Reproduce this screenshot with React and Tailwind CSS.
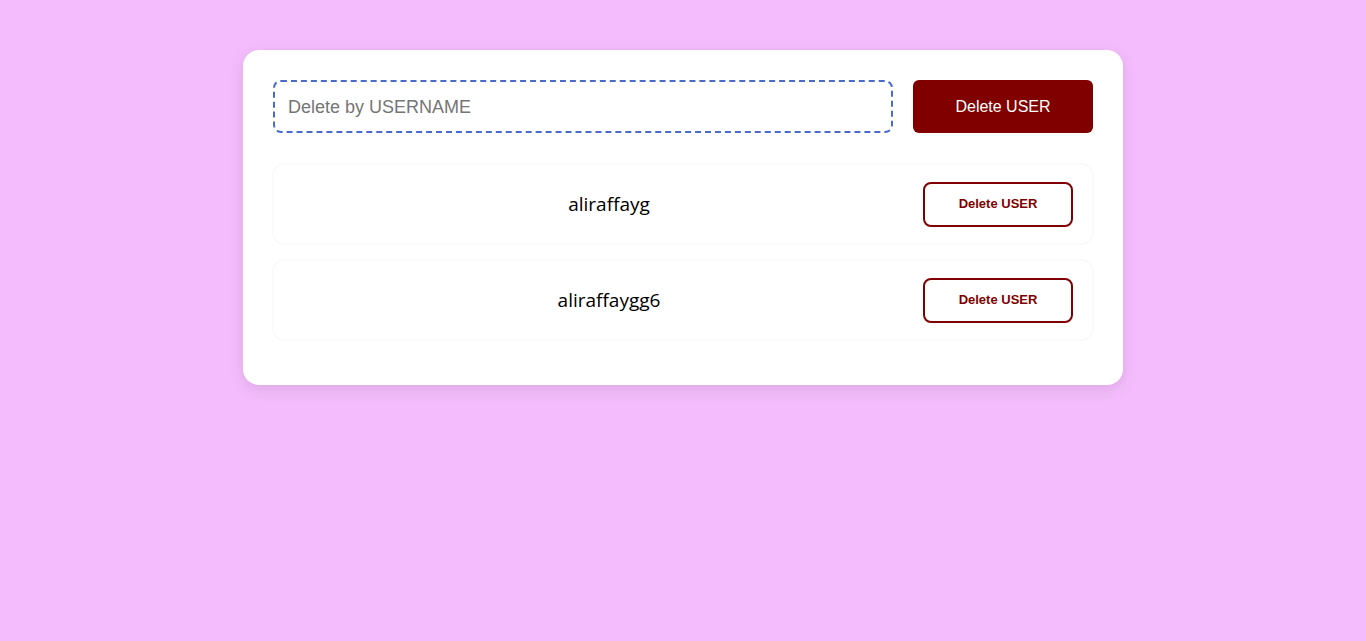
import { useState } from 'react';

const App = () => {
  const [users, setUsers] = useState(['aliraffayg', 'aliraffaygg6']);
  const [name, setName] = useState('');

  const removeUser = (u) => setUsers(users.filter((x) => x !== u));

  return (
    <div className="min-h-screen bg-[#f4bcfc] pt-[50px] font-['Liberation_Sans',Arial,sans-serif]">
      <div className="mx-auto w-[880px] bg-white rounded-2xl shadow-[0_4px_16px_rgba(0,0,0,0.1)] pt-[30px] pb-[44px] px-[30px]">
        <div className="flex gap-5">
          <input
            value={name}
            onChange={(e) => setName(e.target.value)}
            placeholder="Delete by USERNAME"
            className="w-[620px] h-[53px] border-2 border-dashed border-[#4a6bc9] rounded-lg px-[13px] pt-px text-lg text-gray-800 placeholder:text-[#767676] outline-none"
          />
          <button
            onClick={() => removeUser(name)}
            className="w-[180px] h-[53px] bg-[#800000] text-white rounded-md text-base"
          >
            Delete USER
          </button>
        </div>

        <div className="mt-[30px] -mx-px flex flex-col gap-[14px]">
          {users.map((u) => (
            <div key={u} className="h-[82px] flex items-center pl-[21px] pr-[19px] border-2 border-[#fafafa] rounded-xl">
              <p className="flex-1 text-center text-[19px] text-black font-['Open_Sans',sans-serif]">{u}</p>
              <button
                onClick={() => removeUser(u)}
                className="w-[150px] h-[45px] border-2 border-[#800000] rounded-lg text-[13px] font-bold text-[#800000]"
              >
                Delete USER
              </button>
            </div>
          ))}
        </div>
      </div>
    </div>
  );
};

export default App;
